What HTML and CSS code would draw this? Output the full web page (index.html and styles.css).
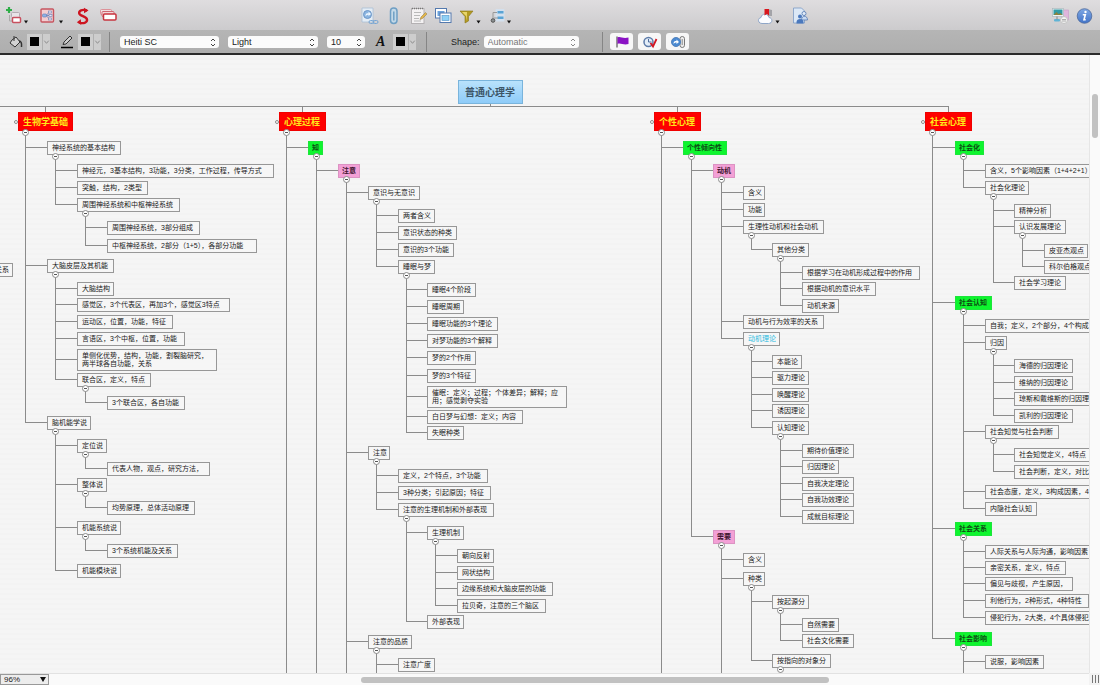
FILE: index.html
```html
<!DOCTYPE html>
<html lang="zh-CN">
<head>
<meta charset="utf-8">
<title>普通心理学</title>
<link rel="stylesheet" href="styles.css">
</head>
<body>
<header class="toolbar">
  <div class="group">
    <button class="tool wide" aria-label="Add topic">
      <svg width="26" height="20" viewBox="0 0 26 20"><rect x="5.500" y="5.500" width="8" height="5" rx="1" fill="#e8e4e8" stroke="#b5aab2"/><path d="M3.500 8v6h3" fill="none" stroke="#aaa"/><rect x="6.500" y="10.500" width="8" height="5" rx="1" fill="#fff" stroke="#c8505f" stroke-width="1.500"/><path d="M3 0v6M0 3h6" stroke="#2fae48" stroke-width="2.200"/><path d="M18 13.500h4l-2 3z" fill="#111"/></svg>
    </button>
    <button class="tool wide" aria-label="Structure">
      <svg width="26" height="20" viewBox="0 0 26 20"><rect x="1" y="2" width="12.500" height="13" rx="1" fill="#f3cdd0" stroke="#c65560" stroke-width="1.400"/><path d="M5 8.500h5M6 8.500l3-3M6 8.500l3 3" stroke="#7d8fbf" fill="none"/><rect x="2.500" y="7" width="4" height="3" rx="1" fill="#8eb2e6" stroke="#5d7ab8" stroke-width=".6"/><rect x="8.500" y="4" width="3" height="2" fill="#e6e8f4" stroke="#6b80b4" stroke-width=".6"/><rect x="9" y="7.500" width="3" height="2" fill="#e6e8f4" stroke="#6b80b4" stroke-width=".6"/><rect x="8.500" y="11" width="3" height="2" fill="#e6e8f4" stroke="#6b80b4" stroke-width=".6"/><path d="M19 13.500h4l-2 3z" fill="#111"/></svg>
    </button>
    <button class="tool" aria-label="Relationship">
      <svg width="18" height="20" viewBox="0 0 18 20"><path d="M13 3.500C8 2 4.800 3.500 5.200 6.300s7.300 3 7.800 6.200-4 4.500-8 3" fill="none" stroke="#cd1420" stroke-width="2.400"/><path d="M10 .8l4.500 2.700-4.500 2.700zM6.800 12.300l-4 3 4.500 2.800z" fill="#cd1420"/></svg>
    </button>
    <button class="tool" aria-label="Boundary">
      <svg width="18" height="20" viewBox="0 0 18 20"><rect x=".5" y="2.500" width="11" height="5" rx="1" fill="#efdfe2" stroke="#dd9299"/><rect x="2" y="4.500" width="12" height="5" rx="1" fill="#f3d7da" stroke="#cf6771"/><rect x="3.500" y="7" width="12.500" height="6" rx="1" fill="#fff" stroke="#c8343f" stroke-width="1.500"/></svg>
    </button>
  </div>
  <div class="group">
    <button class="tool" aria-label="Hyperlink">
      <svg width="18" height="20" viewBox="0 0 18 20"><path d="M1 1h11v14H1z" fill="#e4edf6" stroke="#a9bfd6" stroke-width=".8"/><circle cx="6.500" cy="7.500" r="4" fill="#8ab4e0" stroke="#6d97c8"/><path d="M4.500 9.500c0-3 1-3.500 3-3V4.500L10 7 7.500 9V7.800c-1 0-2 .2-3 1.700z" fill="#eff7ff"/><rect x="8" y="13.500" width="5" height="3" rx="1.500" fill="none" stroke="#78a6d4"/><rect x="12" y="13.500" width="5" height="3" rx="1.500" fill="none" stroke="#78a6d4"/></svg>
    </button>
    <button class="tool" aria-label="Attachment">
      <svg width="16" height="20" viewBox="0 0 16 20"><rect x="3.500" y="1" width="6.500" height="15.500" rx="3.200" fill="#c3d9e8" stroke="#6f9fc4" stroke-width="1.500"/><path d="M6.800 4.500v9" stroke="#6f9fc4" stroke-width="1.500"/></svg>
    </button>
    <button class="tool" aria-label="Notes">
      <svg width="16" height="20" viewBox="0 0 16 20"><rect x=".5" y="1.500" width="12.500" height="15" fill="#f4f2f3" stroke="#b4b1b3"/><path d="M1 1.500h12" stroke="#777" stroke-width="1.500" stroke-dasharray="1 1"/><path d="M3 5.500h7M3 8.500h6M3 11.500h5M3 14h7" stroke="#aaa" stroke-width=".8"/><path d="M9 12.500l1-2.500L14.500 5.500 16 7l-4.500 4.500z" fill="#e3b548" stroke="#8a7747" stroke-width=".5"/></svg>
    </button>
    <button class="tool" aria-label="Windows">
      <svg width="18" height="20" viewBox="0 0 18 20"><rect x=".5" y="1.500" width="11" height="9.500" fill="#fff" stroke="#5479ae"/><rect x="2.500" y="4" width="7" height="5" fill="#6ba2dc"/><rect x="5" y="6" width="11" height="9.500" fill="#fff" stroke="#5479ae"/><rect x="7" y="8.500" width="7" height="5" fill="#8fd0f5" stroke="#5c9bcc" stroke-width=".7"/></svg>
    </button>
    <button class="tool" aria-label="Filter">
      <svg width="22" height="20" viewBox="0 0 22 20"><path d="M-1 4h13L7.500 9.500V14L4 16V9.500z" fill="#b39a23" stroke="#8a7517" stroke-width=".6"/><path d="M1 5h5L5.800 14 5 9z" fill="#e8d56a"/><path d="M15.500 13.500h4l-2 3z" fill="#111"/></svg>
    </button>
    <button class="tool" aria-label="Numbering">
      <svg width="22" height="20" viewBox="0 0 22 20"><rect x="4.500" y="2" width="9" height="12.500" rx="1" fill="#d3e0ee"/><rect x="6.500" y="4" width="6" height="2.500" fill="#5aa3d4"/><rect x="6.500" y="9.500" width="6" height="2.500" fill="#5aa3d4"/><path d="M2 11V5.500h4M3 11h4" stroke="#999" fill="none"/><circle cx="2" cy="13.500" r="1.800" fill="#8a8f90" stroke="#555"/><path d="M16 13.500h4l-2 3z" fill="#111"/></svg>
    </button>
  </div>
  <div class="group">
    <button class="tool wide" aria-label="Share">
      <svg width="26" height="20" viewBox="0 0 26 20"><path d="M12 2l4 1v6h-4z" fill="#a3a3a8"/><path d="M6 16.500c-4.500 0-4.500-5.500-1-6 .5-4.500 7-4.500 8 0 4 .5 3.800 6-.5 6z" fill="#fbfcff" stroke="#8fa6c8"/><path d="M8.500 2h4.500v6.500l-2.200-1.500-2.300 1.500z" fill="#d9161d"/><path d="M19.500 13.500h4l-2 3z" fill="#111"/></svg>
    </button>
    <button class="tool" aria-label="Collaborate">
      <svg width="18" height="20" viewBox="0 0 18 20"><path d="M3.500 1h8l3 3v12h-11z" fill="#dce8f6" stroke="#7c9ac4" stroke-width=".8"/><circle cx="14" cy="6.500" r="2" fill="#e2edf9" stroke="#5379b2" stroke-width=".8"/><path d="M11.500 13c0-5 6-5 6 0z" fill="#c8daf2" stroke="#5379b2" stroke-width=".8"/><circle cx="10" cy="9.500" r="2" fill="#4a78bd"/><path d="M6.500 16.500V15c0-4 7-4 7 0v1.500z" fill="#4a78bd"/></svg>
    </button>
  </div>
  <div class="group">
    <button class="tool" aria-label="Presentation">
      <svg width="18" height="20" viewBox="0 0 18 20"><rect x="10.500" y="3" width="7" height="10" fill="#dfb5dc" stroke="#c79bc8" stroke-width=".6"/><rect x="1.500" y="1.500" width="11" height="8" fill="#eef3f4" stroke="#aab8bd" stroke-width=".7"/><rect x="2.500" y="2.500" width="9" height="5.500" fill="#319ba5"/><path d="M2.500 8l3-3 2 2 2-1 2 2z" fill="#8a813d"/><rect x="3" y="12" width="6" height="2.500" rx="1" fill="#60b4d6"/><path d="M6 9.500v3" stroke="#888"/><circle cx="13" cy="13" r="3.500" fill="#f4f4f4" stroke="#c2c2c2"/><path d="M11 12.500h4M11 14h4" stroke="#999" stroke-width=".8"/></svg>
    </button>
    <button class="tool" aria-label="Inspector">
      <svg width="16" height="20" viewBox="0 0 16 20"><defs><linearGradient id="blue" x2="0" y2="1"><stop stop-color="#7fa8e4"/><stop offset="1" stop-color="#4273c8"/></linearGradient></defs><circle cx="7.500" cy="9" r="7.300" fill="url(#blue)" stroke="#4f699a" stroke-width=".8"/><circle cx="8.500" cy="5" r="1.200" fill="#fff"/><path d="M5.800 7.800h2.500L7 12.800h1.700" fill="none" stroke="#fff" stroke-width="1.600"/></svg>
    </button>
  </div>
</header>

<div class="formatbar">
  <div class="cell colors">
    <div class="pair">
      <svg width="14" height="14" viewBox="0 0 14 14" aria-hidden="true"><path d="M5 1v5M3 5l4-3 4 5-5 5-5-4z" fill="#d2d2d2" stroke="#333"/><path d="M10 6c2 0 3 2 2.500 6" fill="none" stroke="#333" stroke-width="1.500"/></svg>
      <button class="swatch" aria-label="Fill colour"><span class="ink"></span><svg width="8" height="16" viewBox="0 0 8 16"><path d="M1.500 6.500l2.500 3 2.500-3" fill="none" stroke="#888"/></svg></button>
    </div>
    <div class="pair">
      <svg width="14" height="14" viewBox="0 0 14 14" aria-hidden="true"><path d="M3 9.500L4 7l6-6 2 2-6 6z" fill="#ccc" stroke="#333"/><path d="M1 12.500h12" stroke="#000" stroke-width="1.500"/></svg>
      <button class="swatch" aria-label="Line colour"><span class="ink"></span><svg width="8" height="16" viewBox="0 0 8 16"><path d="M1.500 6.500l2.500 3 2.500-3" fill="none" stroke="#888"/></svg></button>
    </div>
  </div>
  <div class="cell fonts">
    <div class="picker family"><select aria-label="Font"><option>Heiti SC</option></select><svg class="updown" width="6" height="9" viewBox="0 0 6 9"><path d="M1 3l2-2 2 2M1 6l2 2 2-2" fill="none" stroke="currentColor"/></svg></div>
    <div class="picker weight"><select aria-label="Weight"><option>Light</option></select><svg class="updown" width="6" height="9" viewBox="0 0 6 9"><path d="M1 3l2-2 2 2M1 6l2 2 2-2" fill="none" stroke="currentColor"/></svg></div>
    <div class="picker size"><select aria-label="Size"><option>10</option></select><svg class="updown" width="6" height="9" viewBox="0 0 6 9"><path d="M1 3l2-2 2 2M1 6l2 2 2-2" fill="none" stroke="currentColor"/></svg></div>
    <div class="pair letter">
      <span class="glyph">A</span>
      <button class="swatch" aria-label="Text colour"><span class="ink"></span><svg width="8" height="16" viewBox="0 0 8 16"><path d="M1.500 6.500l2.500 3 2.500-3" fill="none" stroke="#888"/></svg></button>
    </div>
  </div>
  <div class="cell shapes">
    <label for="shape">Shape:</label>
    <div class="picker shape"><select id="shape"><option>Automatic</option></select><svg class="updown" width="6" height="9" viewBox="0 0 6 9"><path d="M1 3l2-2 2 2M1 6l2 2 2-2" fill="none" stroke="currentColor"/></svg></div>
  </div>
  <div class="cell marks">
    <button class="mark" aria-label="Marker"><svg width="16" height="14" viewBox="0 0 16 14"><path d="M3 1.500v11" stroke="#555" stroke-width="1.200"/><path d="M3.500 2.500c3-1.500 5 1.500 11 0v6.500c-5 1.500-8-1.500-11 0z" fill="#8a12c4"/></svg></button>
    <button class="mark" aria-label="Task"><svg width="16" height="14" viewBox="0 0 16 14"><circle cx="6.500" cy="7" r="4.500" fill="#e3edf8" stroke="#5e7ca9" stroke-width="1.500"/><path d="M6.500 4v3h3" fill="none" stroke="#4d6c9c"/><path d="M8.500 8l2.500 3.500L14.500 4" fill="none" stroke="#d31420" stroke-width="1.800"/></svg></button>
    <button class="mark" aria-label="Links"><svg width="16" height="14" viewBox="0 0 16 14"><rect x="10" y="1.500" width="4.500" height="11" rx="2.200" fill="#eee" stroke="#777"/><path d="M12.200 4v6" stroke="#888"/><circle cx="6" cy="7" r="4.500" fill="#4a8ad2" stroke="#5584bd"/><path d="M3.500 9c0-2.500 1-3 3-3V4.500L9 7 6.500 9V7.500c-1.500 0-2 .5-3 1.500z" fill="#fff"/></svg></button>
  </div>
</div>

<div class="workspace">
  <main class="canvas" id="canvas"></main>
  <div class="vscroll"><div class="vthumb"></div></div>
  <footer class="bottom">
    <div class="picker zoom"><select aria-label="Zoom"><option>96%</option></select><svg class="updown" width="6" height="5" viewBox="0 0 6 5"><path d="M0 0h6L3 5z" fill="currentColor"/></svg></div>
    <div class="hscroll"><div class="hthumb"></div></div>
  </footer>
  <div class="grip"><svg width="8" height="8" viewBox="0 0 8 8"><path d="M1.500 0v8M4.500 0v8M7.500 0v8" stroke="#777"/></svg></div>
</div>
<script src="map.js"></script>
</body>
</html>
```
FILE: styles.css
```css
* { box-sizing: border-box; }

body {
  margin: 0;
  height: 100vh;
  display: flex;
  flex-direction: column;
  overflow: hidden;
  font: 9px "Liberation Sans", "Noto Sans CJK SC", sans-serif;
  color: #222;
}

button {
  padding: 0;
  border: 0;
  background: none;
  font: inherit;
}

svg { display: block; overflow: visible; }

.toolbar {
  flex: none;
  display: flex;
  justify-content: space-between;
  align-items: center;
  height: 30px;
  padding: 4px 7px 0 6px;
  background: linear-gradient(#dfdddf, #cccbcd);
}

.group { display: flex; gap: 8px; }

.formatbar {
  flex: none;
  display: flex;
  align-items: center;
  height: 25px;
  background: linear-gradient(#b5b5b5, #aeaeae);
  border-bottom: 2px solid #2b2b2b;
}

.cell {
  display: flex;
  align-items: center;
  height: 20px;
  border-right: 1px solid #858585;
}

.colors { width: 110px; padding-left: 9px; gap: 10px; }
.pair { display: flex; align-items: center; gap: 4px; }

.swatch {
  display: flex;
  align-items: center;
  width: 23px;
  height: 16px;
  background: #cdcdcd;
}

.swatch svg { border-left: 1px solid #b0b0b0; }

.ink {
  width: 9px;
  height: 9px;
  margin: 0 3px;
  background: #000;
}

.fonts { width: 317px; padding-left: 10px; gap: 9px; }
.letter { gap: 6px; }

.glyph {
  width: 11px;
  margin-left: 2px;
  font: italic bold 14px/16px "Liberation Serif", serif;
  color: #111;
}

.picker { position: relative; }

.picker select {
  display: block;
  width: 100%;
  height: 12px;
  padding: 0 4px;
  border: 0;
  border-radius: 3px;
  background: #fbfbfb;
  color: #222;
  font: inherit;
  line-height: 12px;
  appearance: none;
}

.updown {
  position: absolute;
  right: 3px;
  top: 2px;
  color: #444;
  pointer-events: none;
}

.family { width: 99px; }
.weight { width: 90px; }
.size { width: 38px; }

.shapes { width: 176px; padding-left: 24px; gap: 4px; }
.shape { width: 95px; }
.picker.shape select { color: #777; }
.shape .updown { color: #888; }

.marks { padding-left: 7px; gap: 5px; border: 0; }

.mark {
  display: flex;
  justify-content: center;
  align-items: center;
  width: 23px;
  height: 17px;
  border-radius: 3px;
  background: #f7f7f7;
}

.workspace {
  flex: 1;
  min-height: 0;
  display: grid;
  grid-template-columns: 1fr 11px;
  grid-template-rows: 1fr 12px;
}

.canvas {
  position: relative;
  overflow: hidden;
  background: repeating-linear-gradient(#f5f5f5 0 3px, #f3f3f3 3px 5px);
}

.links {
  width: 100%;
  height: 100%;
  fill: none;
  stroke: #8b8b8b;
  shape-rendering: crispEdges;
}

.node {
  position: absolute;
  padding: 2px 4px;
  border: 1px solid #979797;
  background: #f6f6f6;
  font: 7px/8px "Liberation Sans", "Noto Sans CJK SC", sans-serif;
  color: #1a1a1a;
  white-space: pre;
}

.node.root {
  padding: 5px 6px;
  border-color: #79b4dc;
  background: linear-gradient(#b9e2fc, #8ecbf8);
  font: bold 10px/12px "Noto Sans CJK SC", sans-serif;
  color: #3c5567;
}

.node.red {
  padding: 3px 4px;
  border-color: #f00000;
  background: #fe0000;
  font: bold 9px/11px "Noto Sans CJK SC", sans-serif;
  color: #ffe81a;
}

.node.green {
  padding: 2px 3px;
  border-color: #1ce63b;
  background: #0ef52e;
  font-weight: bold;
  color: #0d4d14;
}

.node.pink {
  padding: 2px 3px;
  border-color: #dc93c3;
  background: #f3a0d6;
  font-weight: bold;
  color: #40152f;
}

.node.cyan { color: #2bbbe0; }

.toggle {
  position: absolute;
  width: 7px;
  height: 7px;
  border: 1px solid #8b8b8b;
  border-radius: 50%;
  background: linear-gradient(#555, #555) center / 3px 1px no-repeat #fff;
}

.knob {
  position: absolute;
  width: 4px;
  height: 4px;
  border: 1px solid #8b8b8b;
  border-radius: 50%;
  background: #fff;
}

.vscroll {
  padding: 39px 2px 0;
  border-left: 1px solid #e6e6e6;
  background: #fafafa;
}

.vthumb {
  height: 44px;
  border-radius: 4px;
  background: #c1c1c1;
}

.bottom {
  display: flex;
  border-top: 1px solid #e2e2e2;
  background: #fafafa;
}

.zoom { width: 49px; }

.picker.zoom select {
  height: 11px;
  padding: 0 3px;
  border: 1px solid #999;
  border-radius: 0;
  background: #ededed;
  line-height: 9px;
  font-size: 8px;
}

.zoom .updown { top: 3px; color: #111; }

.hscroll {
  flex: 1;
  display: grid;
  grid-template-columns: 30fr 45fr 25fr;
  padding-top: 3px;
}

.hthumb {
  grid-column: 2;
  height: 6px;
  border-radius: 3px;
  background: #c1c1c1;
}

.grip {
  display: flex;
  justify-content: center;
  align-items: center;
  background: #f3f3f3;
}
```
FILE: map.js
```js
// The canvas starts below the two toolbars; tops are measured from the window.
const OFFSET = 55;

// Each branch: left edge per depth, then topics as
// [depth, top, width, text, style, continues below the view].
const branches = [
  {
    xs: [18, 47, 77, 107], drop: 45,
    topics: [
      [0, 112, 55, "生物学基础", "red"],
      [1, 141, 74, "神经系统的基本结构"],
      [2, 164, 197, "神经元，3基本结构，3功能，3分类，工作过程，传导方式"],
      [2, 181, 71, "突触，结构，2类型"],
      [2, 198, 103, "周围神经系统和中枢神经系统"],
      [3, 221, 93, "周围神经系统，3部分组成"],
      [3, 239, 150, "中枢神经系统，2部分（1+5），各部分功能"],
      [1, 259, 67, "大脑皮层及其机能"],
      [2, 282, 37, "大脑结构"],
      [2, 298, 153, "感觉区，3个代表区，再加3个，感觉区3特点"],
      [2, 315, 96, "运动区，位置，功能，特征"],
      [2, 332, 108, "言语区，3个中枢，位置，功能"],
      [2, 349, 140, "单侧化优势，结构，功能，割裂脑研究，\n两半球各自功能，关系"],
      [2, 373, 74, "联合区，定义，特点"],
      [3, 396, 78, "3个联合区，各自功能"],
      [1, 416, 44, "脑机能学说"],
      [2, 439, 30, "定位说"],
      [3, 462, 103, "代表人物，观点，研究方法，"],
      [2, 478, 30, "整体说"],
      [3, 501, 88, "均势原理，总体活动原理"],
      [2, 521, 44, "机能系统说"],
      [3, 544, 71, "3个系统机能及关系"],
      [2, 564, 44, "机能模块说"]
    ]
  },
  {
    xs: [279, 308, 338, 368, 398, 427, 457], drop: 302,
    topics: [
      [0, 112, 47, "心理过程", "red", true],
      [1, 141, 15, "知", "green", true],
      [2, 164, 22, "注意", "pink", true],
      [3, 186, 52, "意识与无意识"],
      [4, 209, 37, "两者含义"],
      [4, 226, 59, "意识状态的种类"],
      [4, 243, 56, "意识的3个功能"],
      [4, 260, 37, "睡眠与梦"],
      [5, 283, 49, "睡眠4个阶段"],
      [5, 300, 37, "睡眠周期"],
      [5, 317, 71, "睡眠功能的3个理论"],
      [5, 334, 71, "对梦功能的3个解释"],
      [5, 351, 49, "梦的2个作用"],
      [5, 369, 49, "梦的3个特征"],
      [5, 386, 140, "催眠：定义；过程；个体差异；解释；应\n用；感觉剥夺实验"],
      [5, 410, 96, "白日梦与幻想：定义；内容"],
      [5, 426, 37, "失眠种类"],
      [3, 446, 22, "注意"],
      [4, 469, 90, "定义，2个特点，3个功能"],
      [4, 486, 93, "3种分类；引起原因；特征"],
      [4, 503, 96, "注意的生理机制和外部表现"],
      [5, 526, 37, "生理机制"],
      [6, 549, 37, "朝向反射"],
      [6, 566, 37, "网状结构"],
      [6, 582, 96, "边缘系统和大脑皮层的功能"],
      [6, 599, 89, "拉贝奇，注意的三个脑区"],
      [5, 615, 37, "外部表现"],
      [3, 635, 44, "注意的品质", "", true],
      [4, 658, 37, "注意广度"]
    ]
  },
  {
    xs: [654, 683, 713, 743, 772, 802], drop: 677,
    topics: [
      [0, 112, 47, "个性心理", "red", true],
      [1, 141, 44, "个性倾向性", "green"],
      [2, 164, 22, "动机", "pink"],
      [3, 186, 22, "含义"],
      [3, 203, 22, "功能"],
      [3, 220, 81, "生理性动机和社会动机"],
      [4, 243, 37, "其他分类"],
      [5, 266, 118, "根据学习在动机形成过程中的作用"],
      [5, 282, 74, "根据动机的意识水平"],
      [5, 299, 37, "动机来源"],
      [3, 315, 81, "动机与行为效率的关系"],
      [3, 332, 37, "动机理论", "cyan"],
      [4, 355, 30, "本能论"],
      [4, 371, 37, "驱力理论"],
      [4, 388, 37, "唤醒理论"],
      [4, 404, 37, "诱因理论"],
      [4, 421, 37, "认知理论"],
      [5, 444, 52, "期待价值理论"],
      [5, 460, 37, "归因理论"],
      [5, 477, 52, "自我决定理论"],
      [5, 493, 52, "自我功效理论"],
      [5, 510, 52, "成就目标理论"],
      [2, 530, 22, "需要", "pink", true],
      [3, 553, 22, "含义"],
      [3, 572, 22, "种类"],
      [4, 595, 37, "按起源分"],
      [5, 618, 37, "自然需要"],
      [5, 634, 52, "社会文化需要"],
      [4, 654, 59, "按指向的对象分", "", true]
    ]
  },
  {
    xs: [925, 955, 985, 1014, 1044], drop: 948,
    topics: [
      [0, 112, 47, "社会心理", "red"],
      [1, 141, 29, "社会化", "green"],
      [2, 164, 118, "含义，5个影响因素（1+4+2+1）"],
      [2, 181, 44, "社会化理论"],
      [3, 204, 37, "精神分析"],
      [3, 220, 52, "认识发展理论"],
      [4, 244, 44, "皮亚杰观点"],
      [4, 260, 52, "科尔伯格观点"],
      [3, 276, 52, "社会学习理论"],
      [1, 296, 37, "社会认知", "green"],
      [2, 319, 118, "自我；定义，2个部分，4个构成"],
      [2, 336, 22, "归因"],
      [3, 359, 59, "海德的归因理论"],
      [3, 376, 59, "维纳的归因理论"],
      [3, 392, 89, "琼斯和戴维斯的归因理论"],
      [3, 409, 59, "凯利的归因理论"],
      [2, 425, 74, "社会知觉与社会判断"],
      [3, 448, 89, "社会知觉定义，4特点"],
      [3, 465, 89, "社会判断，定义，对比"],
      [2, 485, 118, "社会态度，定义，3构成因素，4"],
      [2, 502, 52, "内隐社会认知"],
      [1, 522, 37, "社会关系", "green"],
      [2, 545, 118, "人际关系与人际沟通，影响因素"],
      [2, 561, 81, "亲密关系，定义，特点"],
      [2, 577, 88, "偏见与歧视，产生原因，"],
      [2, 594, 104, "利他行为，2种形式，4种特性"],
      [2, 611, 118, "侵犯行为，2大类，4个具体侵犯"],
      [1, 632, 37, "社会影响", "green", true],
      [2, 655, 59, "说服，影响因素"]
    ]
  }
];

const canvas = document.getElementById("canvas");
const FAR = 4000;
let path = "M0 51.5H948.5M490.5 47V51.5";

function place(tag, cls, left, top, width, text) {
  const el = document.createElement(tag);
  el.className = cls;
  el.style.left = left + "px";
  el.style.top = top + "px";
  if (width) el.style.width = width + "px";
  if (text) el.textContent = text;
  canvas.appendChild(el);
  return el;
}

const svg = document.createElementNS("http://www.w3.org/2000/svg", "svg");
svg.setAttribute("class", "links");
canvas.appendChild(svg);

place("div", "node root", 458, 80 - OFFSET, 65, "普通心理学");
place("div", "node", -10, 263 - OFFSET, 23, "关系");

for (const { xs, drop, topics } of branches) {
  path += `M${drop + 0.5} 51.5V58`;
  place("span", "knob", xs[0] - 4, 120 - OFFSET);
  topics.forEach(([depth, y, width, text, style = "", open], i) => {
    const x = xs[depth];
    const top = y - OFFSET;
    const height = depth ? 14 : 19;
    const trunk = x + (depth ? 8 : 7);
    place("div", "node " + style, x, top, width, text);

    let last = open ? FAR : 0;
    for (let j = i + 1; j < topics.length && topics[j][0] > depth; j++) {
      if (topics[j][0] !== depth + 1) continue;
      const tall = topics[j][3].includes("\n") ? 11 : 7;
      const cy = topics[j][1] - OFFSET + tall;
      path += `M${trunk + 0.5} ${cy - 0.5}H${xs[depth + 1]}`;
      last = Math.max(last, cy);
    }
    if (last) {
      path += `M${trunk + 0.5} ${top + height}V${last}`;
      place("button", "toggle", trunk - 3, top + height - 2).setAttribute("aria-label", "Collapse " + text);
    }
  });
}

const line = document.createElementNS("http://www.w3.org/2000/svg", "path");
line.setAttribute("d", path);
svg.appendChild(line);
```
